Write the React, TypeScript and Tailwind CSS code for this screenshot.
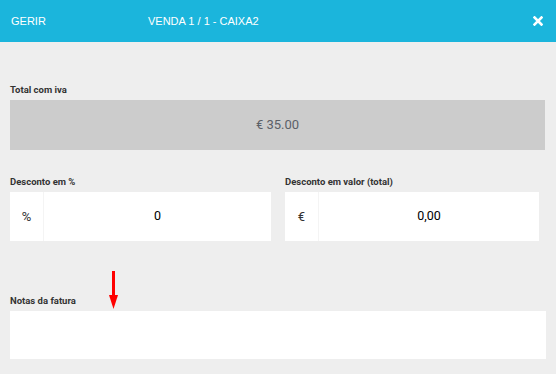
import React from "react";

const font = { fontFamily: "Roboto, 'Liberation Sans', Arial, sans-serif" };

const Label = ({ children }: { children: React.ReactNode }) => (
  <div className="text-[9.5px] leading-[12px] font-bold text-[#333] mb-[4px]">{children}</div>
);

const AddonInput = ({ addon, value, width }: { addon: string; value: string; width: string }) => (
  <div className={`${width} flex h-[49px] bg-white`}>
    <div className="w-[34px] flex items-center justify-center border-r border-[#f4f4f4] text-[13px] text-[#333]">
      {addon}
    </div>
    <div className="flex-1 flex items-center justify-center text-[12.5px] text-black">{value}</div>
  </div>
);

const App = () => {
  return (
    <div className="w-[556px] h-[374px] bg-[#eeeeee] overflow-hidden relative" style={font}>
      <header className="h-[42px] bg-[#1bb5dc] flex items-center text-white text-[11px] px-[11px] font-['Liberation_Sans',Arial,sans-serif]">
        <span className="w-[137px]">GERIR</span>
        <span className="flex-1">VENDA 1 / 1 - CAIXA2</span>
        <svg width="10" height="10" viewBox="0 0 10 10" className="mr-[2px]">
          <path d="M1.5 1.5 L8.5 8.5 M8.5 1.5 L1.5 8.5" stroke="white" strokeWidth="2.6" strokeLinecap="square" />
        </svg>
      </header>

      <main className="px-[10px] pt-[42px]">
        <Label>Total com iva</Label>
        <div className="h-[50px] w-[535px] bg-[#cccccc] flex items-center justify-center text-[13px] text-[#5b6068]">
          € 35.00
        </div>

        <div className="flex gap-[14px] mt-[26px]">
          <div>
            <Label>Desconto em %</Label>
            <AddonInput addon="%" value="0" width="w-[261px]" />
          </div>
          <div>
            <Label>Desconto em valor (total)</Label>
            <AddonInput addon="€" value="0,00" width="w-[254px]" />
          </div>
        </div>

        <div className="mt-[54px]">
          <Label>Notas da fatura</Label>
          <div className="h-[48px] w-[536px] bg-white" />
        </div>
      </main>

      <svg className="absolute left-[108px] top-[271px]" width="11" height="39" viewBox="0 0 11 39">
        <rect x="4" y="0" width="3" height="25" fill="#ff0000" />
        <polygon points="1,24 10,24 5.5,38" fill="#ff0000" />
      </svg>
    </div>
  );
};

export default App;
